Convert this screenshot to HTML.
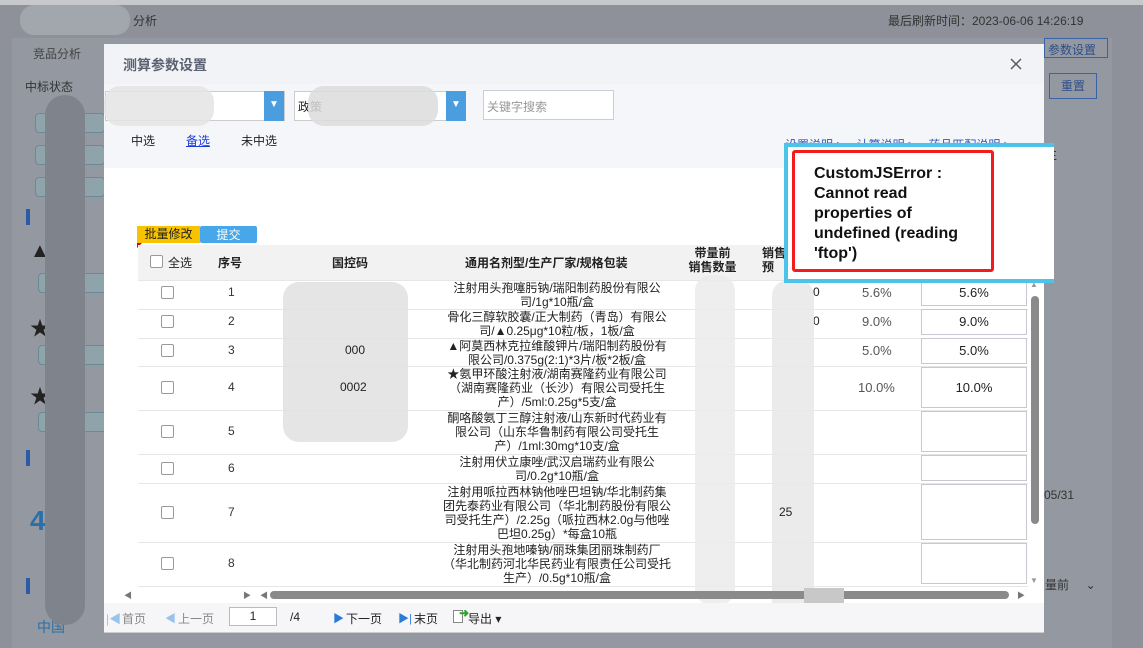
<!DOCTYPE html>
<html><head><meta charset="utf-8"><style>
*{margin:0;padding:0;box-sizing:border-box}
body{width:1143px;height:648px;overflow:hidden;position:relative;font-family:"Liberation Sans","Noto Sans CJK SC",sans-serif;font-size:12px;color:#333;background:#8e9199}
.a{position:absolute}
.t{position:absolute;white-space:nowrap}
.cb{position:absolute;width:13px;height:13px;border:1px solid #999;background:#fff;border-radius:2px}
.cell{position:absolute;text-align:center;font-size:12px;line-height:14px;color:#222}
.inp{position:absolute;border:1px solid #c8c8d0;background:#fff;text-align:center;font-size:13px;line-height:24px;color:#222}
.hl{position:absolute;left:138px;width:890px;height:1px;background:#e6e6e6}
.blur{position:absolute;background:#d4d4d4;border-radius:16px;opacity:.85}
</style></head><body>
<div class="a" style="left:0;top:0;width:1143px;height:5px;background:#fff;opacity:.5"></div>
<div class="a" style="left:12px;top:38px;width:1100px;height:610px;background:#9498a0"></div>
<div class="t" style="left:133px;top:12px;color:#333;font-size:12px">分析</div>
<div class="t" style="left:888px;top:12px;color:#333;font-size:12px">最后刷新时间：2023-06-06 14:26:19</div>
<div class="t" style="left:33px;top:45px;color:#444">竞品分析</div>
<div class="t" style="left:25px;top:78px;color:#333">中标状态</div>
<div class="a" style="left:1044px;top:38px;width:64px;height:20px;border:1px solid #3a63a8;color:#2c4f8a;font-size:12px;padding:2px 0 0 3px">参数设置</div>
<div class="a" style="left:1049px;top:73px;width:48px;height:26px;border:1px solid #3a63a8;color:#2c4f8a;text-align:center;line-height:24px">重置</div>
<div class="a" style="left:35px;top:113px;width:70px;height:20px;border:1px solid #6b8a96;background:#8fa3ab;border-radius:4px"></div>
<div class="a" style="left:35px;top:145px;width:70px;height:20px;border:1px solid #6b8a96;background:#8fa3ab;border-radius:4px"></div>
<div class="a" style="left:35px;top:177px;width:70px;height:20px;border:1px solid #6b8a96;background:#8fa3ab;border-radius:4px"></div>
<div class="a" style="left:26px;top:209px;width:4px;height:16px;background:#2a5aa8"></div>
<div class="t" style="left:30px;top:240px;font-size:20px;color:#222">▲</div>
<div class="t" style="left:30px;top:312px;font-size:20px;color:#222">★</div>
<div class="t" style="left:30px;top:380px;font-size:20px;color:#222">★</div>
<div class="a" style="left:38px;top:273px;width:70px;height:20px;border:1px solid #6b8a96;background:#8fa3ab;border-radius:4px"></div>
<div class="a" style="left:38px;top:345px;width:70px;height:20px;border:1px solid #6b8a96;background:#8fa3ab;border-radius:4px"></div>
<div class="a" style="left:38px;top:412px;width:70px;height:20px;border:1px solid #6b8a96;background:#8fa3ab;border-radius:4px"></div>
<div class="a" style="left:26px;top:450px;width:4px;height:16px;background:#2a5aa8"></div>
<div class="a" style="left:26px;top:578px;width:4px;height:16px;background:#2a5aa8"></div>
<div class="t" style="left:30px;top:505px;font-size:28px;font-weight:bold;color:#2a6fa8">4.0</div>
<div class="t" style="left:37px;top:617px;font-size:14px;color:#2a6fa8">中国</div>
<div class="t" style="left:1044px;top:488px;color:#333">05/31</div>
<div class="t" style="left:1045px;top:576px;color:#333">量前 &nbsp;&nbsp;&nbsp;&nbsp;⌄</div>
<div class="a" style="left:45px;top:95px;width:40px;height:530px;background:#7f838c;border-radius:20px"></div>
<div class="a" style="left:20px;top:5px;width:110px;height:30px;background:#a2a6ad;border-radius:14px"></div>

<div class="a" style="left:104px;top:44px;width:940px;height:588px;background:#fff"></div>
<div class="a" style="left:104px;top:44px;width:940px;height:40px;background:#f2f3f6"></div>
<div class="t" style="left:123px;top:55px;font-size:14px;font-weight:bold;color:#5b6272">测算参数设置</div>
<svg class="a" style="left:1010px;top:58px" width="12" height="12" viewBox="0 0 12 12"><path d="M1 1L11 11M11 1L1 11" stroke="#555" stroke-width="1.4"/></svg>
<div class="a" style="left:104px;top:84px;width:940px;height:84px;background:#f5f6f9"></div>
<div class="a" style="left:105px;top:91px;width:180px;height:30px;background:#fff;border:1px solid #ccc"></div>
<div class="a" style="left:264px;top:91px;width:20px;height:30px;background:#4a9ee0"></div>
<div class="t" style="left:269px;top:99px;color:#fff;font-size:10px">▼</div>
<div class="blur" style="left:104px;top:86px;width:110px;height:40px;background:#e4e4e4"></div>
<div class="a" style="left:294px;top:91px;width:172px;height:30px;background:#fff;border:1px solid #ccc"></div>
<div class="t" style="left:298px;top:98px;color:#222">政策</div>
<div class="a" style="left:446px;top:91px;width:20px;height:30px;background:#4a9ee0"></div>
<div class="t" style="left:451px;top:99px;color:#fff;font-size:10px">▼</div>
<div class="blur" style="left:308px;top:86px;width:130px;height:40px;background:#dcdcdc"></div>
<div class="a" style="left:483px;top:90px;width:131px;height:30px;background:#fff;border:1px solid #c8cdd8"></div>
<div class="t" style="left:487px;top:98px;color:#999">关键字搜索</div>
<div class="t" style="left:131px;top:132px;color:#222">中选</div>
<div class="t" style="left:186px;top:132px;color:#1a3de0;text-decoration:underline">备选</div>
<div class="t" style="left:241px;top:132px;color:#222">未中选</div>
<div class="t" style="left:785px;top:136px;color:#2a5ab8">设置说明 &gt; &nbsp;&nbsp;&nbsp;计算说明 &gt; &nbsp;&nbsp;&nbsp;药品匹配说明 &gt;</div>
<div class="t" style="left:1045px;top:146px;color:#222;font-size:12px">生</div>
<div class="a" style="left:137px;top:226px;width:63px;height:17px;background:#f7c200;text-align:center;line-height:17px;color:#222">批量修改</div>
<div class="a" style="left:200px;top:226px;width:57px;height:17px;background:#48a7e8;border-radius:2px;text-align:center;line-height:18px;color:#fff">提交</div>
<div class="a" style="left:137px;top:243px;width:0;height:0;border-top:5px solid #d00;border-right:5px solid transparent"></div>
<div class="a" style="left:138px;top:245px;width:890px;height:35px;background:#f2f2f2"></div>
<div class="cb" style="left:150px;top:255px"></div>
<div class="t" style="left:168px;top:254px;color:#222">全选</div>
<div class="t" style="left:218px;top:254px;font-weight:bold;color:#222">序号</div>
<div class="t" style="left:332px;top:254px;font-weight:bold;color:#222">国控码</div>
<div class="t" style="left:465px;top:254px;font-weight:bold;color:#222">通用名剂型/生产厂家/规格包装</div>
<div class="cell" style="left:680px;top:246px;width:65px;font-weight:bold">带量前<br>销售数量</div>
<div class="cell" style="left:762px;top:246px;width:30px;font-weight:bold;text-align:left">销售<br>预</div>
<div class="hl" style="top:280px"></div><div class="hl" style="top:309px"></div><div class="hl" style="top:338px"></div><div class="hl" style="top:366px"></div><div class="hl" style="top:410px"></div><div class="hl" style="top:454px"></div><div class="hl" style="top:483px"></div><div class="hl" style="top:542px"></div><div class="hl" style="top:586px"></div>
<div class="cb" style="left:161px;top:286px"></div><div class="t" style="left:228px;top:285px">1</div>
<div class="cb" style="left:161px;top:315px"></div><div class="t" style="left:228px;top:314px">2</div>
<div class="cb" style="left:161px;top:344px"></div><div class="t" style="left:228px;top:343px">3</div>
<div class="cb" style="left:161px;top:381px"></div><div class="t" style="left:228px;top:380px">4</div>
<div class="cb" style="left:161px;top:425px"></div><div class="t" style="left:228px;top:424px">5</div>
<div class="cb" style="left:161px;top:462px"></div><div class="t" style="left:228px;top:461px">6</div>
<div class="cb" style="left:161px;top:506px"></div><div class="t" style="left:228px;top:505px">7</div>
<div class="cb" style="left:161px;top:557px"></div><div class="t" style="left:228px;top:556px">8</div>
<div class="cell" style="left:443px;top:281px;width:228px">注射用头孢噻肟钠/瑞阳制药股份有限公司/1g*10瓶/盒</div>
<div class="cell" style="left:443px;top:310px;width:228px">骨化三醇软胶囊/正大制药（青岛）有限公司/▲0.25μg*10粒/板，1板/盒</div>
<div class="cell" style="left:443px;top:339px;width:228px">▲阿莫西林克拉维酸钾片/瑞阳制药股份有限公司/0.375g(2:1)*3片/板*2板/盒</div>
<div class="cell" style="left:443px;top:367px;width:228px">★氨甲环酸注射液/湖南赛隆药业有限公司（湖南赛隆药业（长沙）有限公司受托生产）/5ml:0.25g*5支/盒</div>
<div class="cell" style="left:443px;top:411px;width:228px">酮咯酸氨丁三醇注射液/山东新时代药业有限公司（山东华鲁制药有限公司受托生产）/1ml:30mg*10支/盒</div>
<div class="cell" style="left:443px;top:455px;width:228px">注射用伏立康唑/武汉启瑞药业有限公司/0.2g*10瓶/盒</div>
<div class="cell" style="left:443px;top:485px;width:228px">注射用哌拉西林钠他唑巴坦钠/华北制药集团先泰药业有限公司（华北制药股份有限公司受托生产）/2.25g（哌拉西林2.0g与他唑巴坦0.25g）*每盒10瓶</div>
<div class="cell" style="left:443px;top:543px;width:228px">注射用头孢地嗪钠/丽珠集团丽珠制药厂（华北制药河北华民药业有限责任公司受托生产）/0.5g*10瓶/盒</div>
<div class="t" style="left:862px;top:285px;color:#555;font-size:13px">5.6%</div>
<div class="t" style="left:862px;top:314px;color:#555;font-size:13px">9.0%</div>
<div class="t" style="left:862px;top:343px;color:#555;font-size:13px">5.0%</div>
<div class="t" style="left:858px;top:380px;color:#555;font-size:13px">10.0%</div>
<div class="t" style="left:813px;top:285px;color:#222">0</div><div class="t" style="left:813px;top:314px;color:#222">0</div>
<div class="inp" style="left:921px;top:280px;width:106px;height:26px">5.6%</div>
<div class="inp" style="left:921px;top:309px;width:106px;height:26px">9.0%</div>
<div class="inp" style="left:921px;top:338px;width:106px;height:26px">5.0%</div>
<div class="inp" style="left:921px;top:367px;width:106px;height:41px;line-height:39px">10.0%</div>
<div class="inp" style="left:921px;top:411px;width:106px;height:41px"></div>
<div class="inp" style="left:921px;top:455px;width:106px;height:26px"></div>
<div class="inp" style="left:921px;top:484px;width:106px;height:56px"></div>
<div class="inp" style="left:921px;top:543px;width:106px;height:41px"></div>
<div class="blur" style="left:283px;top:282px;width:125px;height:160px;background:#e0e0e0"></div>
<div class="t" style="left:345px;top:343px;color:#222">000</div>
<div class="t" style="left:340px;top:380px;color:#222">0002</div>
<div class="blur" style="left:695px;top:275px;width:40px;height:330px;background:#ebebeb"></div>
<div class="blur" style="left:772px;top:280px;width:42px;height:340px;background:#e8e8e8"></div>
<div class="t" style="left:779px;top:505px;color:#222">25</div>
<div class="a" style="left:1031px;top:296px;width:8px;height:228px;background:#8a8a8a;border-radius:4px"></div>
<div class="t" style="left:1030px;top:280px;font-size:8px;color:#999">▲</div>
<div class="t" style="left:1030px;top:576px;font-size:8px;color:#999">▼</div>
<div class="t" style="left:124px;top:590px;font-size:8px;color:#777">◀</div>
<div class="t" style="left:243px;top:590px;font-size:8px;color:#777">▶</div>
<div class="t" style="left:260px;top:590px;font-size:8px;color:#777">◀</div>
<div class="t" style="left:1017px;top:590px;font-size:8px;color:#777">▶</div>
<div class="a" style="left:270px;top:591px;width:739px;height:8px;background:#8a8a8a;border-radius:4px"></div>
<div class="a" style="left:804px;top:588px;width:40px;height:40px;background:#c8c8c8"></div>
<div class="a" style="left:104px;top:603px;width:940px;height:29px;background:#f6f6f8"></div>
<div class="t" style="left:106px;top:610px;color:#9ac3ea;font-size:12px">|◀</div>
<div class="t" style="left:122px;top:610px;color:#888">首页</div>
<div class="t" style="left:165px;top:610px;color:#9ac3ea;font-size:11px">◀</div>
<div class="t" style="left:178px;top:610px;color:#888">上一页</div>
<div class="a" style="left:229px;top:607px;width:48px;height:19px;border:1px solid #bbb;background:#fff;text-align:center;line-height:17px;color:#222">1</div>
<div class="t" style="left:290px;top:610px;color:#222">/4</div>
<div class="t" style="left:333px;top:610px;color:#2a7ad8;font-size:11px">▶</div>
<div class="t" style="left:346px;top:610px;color:#222">下一页</div>
<div class="t" style="left:398px;top:610px;color:#2a7ad8;font-size:11px">▶|</div>
<div class="t" style="left:414px;top:610px;color:#222">末页</div>
<div class="a" style="left:453px;top:610px;width:10px;height:13px;border:1px solid #888;background:#fff"></div>
<div class="t" style="left:459px;top:606px;color:#2a2;font-size:12px;font-weight:bold">➜</div>
<div class="t" style="left:468px;top:610px;color:#222">导出 ▾</div>
<div class="a" style="left:104px;top:632px;width:940px;height:1px;background:#ccc"></div>
<div class="a" style="left:784px;top:143px;width:270px;height:140px;background:#fff;border:4px solid #4ec3ea;border-right:none"></div>
<div class="a" style="left:792px;top:150px;width:202px;height:122px;border:3px solid #f21c1c;border-radius:3px;padding:11px 0 0 19px;font-family:'Liberation Sans',sans-serif;font-weight:bold;font-size:16px;line-height:20px;color:#111">CustomJSError :<br>Cannot read<br>properties of<br>undefined (reading<br>'ftop')</div>
</body></html>
